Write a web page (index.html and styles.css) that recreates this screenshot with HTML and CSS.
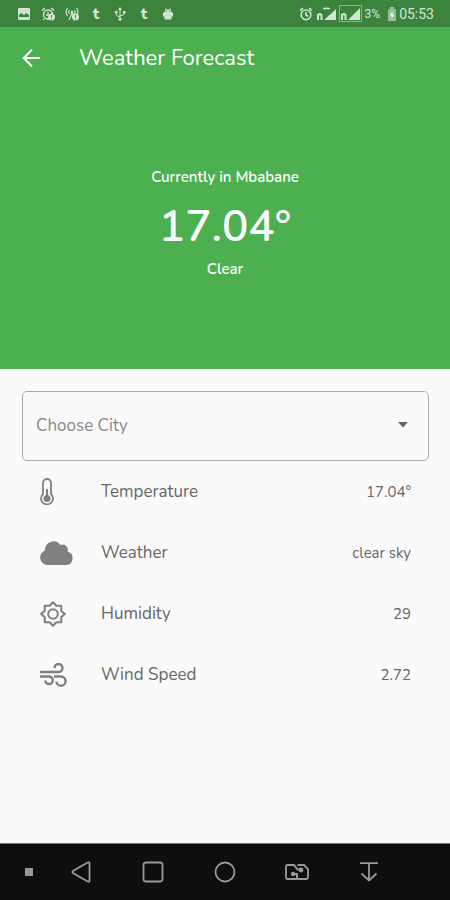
FILE: index.html
```html
<!DOCTYPE html>
<html lang="en">
<head>
    <meta charset="UTF-8">
    <meta name="viewport" content="width=device-width, initial-scale=1.0">
    <title>Weather Forecast</title>
    <link rel="stylesheet" href="styles.css">
</head>
<body>
    <div class="status-bar">
        <div class="notifications">
            <svg width="14" height="14" viewBox="0 0 14 14"><path fill="currentColor" fill-rule="evenodd" d="M2 1h10a1 1 0 0 1 1 1v10a1 1 0 0 1-1 1H2a1 1 0 0 1-1-1V2a1 1 0 0 1 1-1zM2 10h10V8L9 6 7 8 4 6 2 8z"/></svg>
            <svg width="14" height="14" viewBox="0 0 14 14"><g fill="none" stroke="currentColor" stroke-width="1.4"><circle cx="7" cy="7.5" r="4.5"/><path d="M1 3.5 4 1M10 1l3 2.5M7 5v3H5M3 12l-1 1"/></g><circle cx="10.5" cy="10" r="3.5" fill="currentColor"/><path d="M10.5 8v2.5M10.5 11.5v1" stroke="#3c833e"/></svg>
            <svg width="14" height="14" viewBox="0 0 14 14"><g fill="none" stroke="currentColor" stroke-width="1.2"><path d="M2.5 1Q-.5 5 2.5 9M4.5 3Q3 5 4.5 7M9.5 3Q11 5 9.5 7M11.5 1q3 4 0 8M7 6l-3 7M7 6l2 4"/></g><circle cx="7" cy="5" r="1.3" fill="currentColor"/><circle cx="10.5" cy="10" r="3.5" fill="currentColor"/><path d="M10.5 8v2.5M10.5 11.5v1" stroke="#3c833e"/></svg>
            <span class="letter">t</span>
            <svg width="14" height="14" viewBox="0 0 14 14"><g fill="none" stroke="currentColor"><path d="M7 2v10M3 5v2q0 2 4 3M11 5v2q0 1-4 2"/></g><path fill="currentColor" d="M7 0l2 3H5zM2 4h2.5v2.5H2zM10 4h2.5v2.5H10z"/><circle cx="7" cy="12.3" r="1.5" fill="currentColor"/></svg>
            <span class="letter">t</span>
            <svg width="14" height="14" viewBox="0 0 14 14"><path fill="currentColor" fill-rule="evenodd" d="M3.5 5.5Q3.5 3.5 5 2.8L4 1.5 4.6 1 6 2.4h2L9.4 1l.6.5-1 1.3q1.5.7 1.5 2.7H12v4h-1.5v2q0 1-1 1h-5q-1 0-1-1v-2H2v-4zM5 4v1h1V4zM8 4v1h1V4z"/></svg>
        </div>
        <div class="indicators">
            <svg width="14" height="14" viewBox="0 0 14 14"><g fill="none" stroke="currentColor" stroke-width="1.6"><circle cx="7" cy="7.8" r="4.8"/><path d="M1 3.6 4 1M10 1l3 2.6M7 5v3l2 1.2"/></g></svg>
            <svg width="20" height="15" viewBox="0 0 20 15"><path fill="currentColor" d="M20 3v11H8z"/><path fill="none" stroke="currentColor" stroke-width="2" d="M2 14V8M2 10q0-2 1.800-2T5.5 10v4"/><path fill="none" stroke="currentColor" d="M7 2.5h7M9 1v3M12 1v3"/></svg>
            <svg width="23" height="17" viewBox="0 0 23 17"><path fill="none" stroke="currentColor" opacity=".5" d="M.5.5h22v16H.5z"/><path fill="currentColor" d="M21 3v12H9z"/><path fill="none" stroke="currentColor" stroke-width="2" d="M3 15V9M3 11q0-2 1.800-2T6.5 11v4"/></svg>
            <span class="percent">3%</span>
            <svg width="8" height="14" viewBox="0 0 8 14"><path fill="currentColor" opacity=".6" d="M2 0h4v2h2v12H0V2h2z"/><path fill="#fff" d="M4.5 4 2 8.5h1.700L3.500 12 6 7.500H4.300z"/></svg>
            <time>05:53</time>
        </div>
    </div>

    <header class="app-bar">
        <button class="back" type="button" aria-label="Back">
            <svg width="20" height="20" viewBox="0 0 20 20"><path fill="none" stroke="currentColor" stroke-width="2" d="M18 10H3M10 1.500 1.800 10l8.200 8.500"/></svg>
        </button>
        <h1>Weather Forecast</h1>
    </header>

    <section class="current">
        <p>Currently in Mbabane</p>
        <p class="degrees">17.04°</p>
        <p>Clear</p>
    </section>

    <main class="details">
        <div class="city">
            <select aria-label="Choose City">
                <option>Choose City</option>
            </select>
            <svg class="arrow" width="10" height="6" viewBox="0 0 10 6"><path fill="currentColor" d="M0 0h10L5 5.500z"/></svg>
        </div>

        <table class="readings">
            <tr>
                <td class="icon"><svg width="14" height="28" viewBox="0 0 14 28"><path fill="none" stroke="currentColor" stroke-width="1.8" d="M3 16V5a4 4 0 0 1 8 0v11a6 6 0 1 1-8 0z"/><circle cx="7" cy="20.5" r="3.5" fill="currentColor"/><path stroke="currentColor" stroke-width="2" d="M7 11v10"/></svg></td>
                <th scope="row">Temperature</th>
                <td class="value">17.04°</td>
            </tr>
            <tr>
                <td class="icon"><svg width="34" height="24" viewBox="0 0 34 24"><path fill="currentColor" d="M7.500 24A7.500 7.500 0 0 1 5 9.500V8.500A8.500 8.500 0 0 1 20.500 4a5.200 5.200 0 0 1 7 6.500A6.900 6.900 0 0 1 26.500 24z"/></svg></td>
                <th scope="row">Weather</th>
                <td class="value">clear sky</td>
            </tr>
            <tr>
                <td class="icon"><svg width="26" height="26" viewBox="0 0 26 26"><g fill="none" stroke="currentColor" stroke-width="2" stroke-linejoin="round"><path d="M13 1.200 16.300 4.800 21.300 4.700 21.200 9.700 24.800 13 21.200 16.300 21.300 21.300 16.300 21.200 13 24.800 9.700 21.200 4.700 21.300 4.800 16.300 1.200 13 4.800 9.700 4.700 4.700 9.700 4.800z"/><circle cx="13" cy="13" r="4.800"/></g></svg></td>
                <th scope="row">Humidity</th>
                <td class="value">29</td>
            </tr>
            <tr>
                <td class="icon"><svg width="27" height="24" viewBox="0 0 27 24"><g fill="none" stroke="currentColor" stroke-width="2.4"><path d="M0 9h18.500a4 4 0 1 0-4-4M0 13.500h9a3.800 3.800 0 1 1-3.800 4M14 13.500h7a4.600 4.600 0 1 1-4.600 5"/></g></svg></td>
                <th scope="row">Wind Speed</th>
                <td class="value">2.72</td>
            </tr>
        </table>
    </main>

    <nav class="nav-bar">
        <button class="dot" type="button" aria-label="Hide bar"><svg width="8" height="8" viewBox="0 0 8 8"><path fill="currentColor" d="M0 0h8v8H0z"/></svg></button>
        <button type="button" aria-label="Back"><svg width="20" height="22" viewBox="0 0 20 22"><path fill="none" stroke="currentColor" stroke-width="1.8" stroke-linejoin="round" d="M16.500 1.500q2-.8 2 1v17q0 1.800-2 1L2 12q-1.200-1 0-2z"/></svg></button>
        <button type="button" aria-label="Recent apps"><svg width="22" height="22" viewBox="0 0 22 22"><rect x="1.5" y="1.5" width="19" height="19" rx="2.5" fill="none" stroke="currentColor" stroke-width="1.8"/></svg></button>
        <button type="button" aria-label="Home"><svg width="22" height="22" viewBox="0 0 22 22"><circle cx="11" cy="11" r="9.5" fill="none" stroke="currentColor" stroke-width="1.8"/></svg></button>
        <button type="button" aria-label="Switch"><svg width="24" height="18" viewBox="0 0 24 18"><g fill="none" stroke="currentColor" stroke-width="1.8"><path d="M8 11h4v5H2.500Q1 16 1 14.500v-11Q1 2 2.500 2H9l3.500 4.500H16"/><path d="M12 11v5h9.500q1.500 0 1.500-1.500V6l-4-4h-6.500"/></g><circle cx="8" cy="11" r="2.200" fill="currentColor"/><circle cx="16" cy="7" r="2.400" fill="currentColor"/></svg></button>
        <button type="button" aria-label="Pull down"><svg width="18" height="20" viewBox="0 0 18 20"><path fill="none" stroke="currentColor" stroke-width="1.8" d="M0 1.200h18M9 1v17M1.500 11.500 9 18.500l7.500-7"/></svg></button>
    </nav>
</body>
</html>
```

FILE: styles.css
```css
* {
    box-sizing: border-box;
}
body {
    display: flex;
    flex-direction: column;
    min-height: 100vh;
    margin: 0;
    background: #fafafa;
    color: #666;
    font-family: Nunito, 'Open Sans', sans-serif;
}
svg {
    display: block;
    flex: none;
}
button {
    display: flex;
    padding: 0;
    border: 0;
    background: none;
    color: inherit;
}
.status-bar {
    display: flex;
    justify-content: space-between;
    align-items: center;
    height: 27px;
    padding: 0 16px 0 17px;
    background: #3c833e;
    color: #d3e6d3;
}
.notifications {
    display: flex;
    align-items: center;
    gap: 10px;
}
.letter {
    width: 14px;
    font-size: 16px;
    font-weight: 800;
    line-height: 14px;
    text-align: center;
}
.indicators {
    display: flex;
    align-items: center;
    gap: 3px;
    font-family: Roboto, sans-serif;
    font-size: 14px;
}
.percent {
    margin-right: 5px;
    font-size: 12px;
}
.app-bar {
    display: flex;
    align-items: center;
    gap: 37px;
    height: 61px;
    padding: 0 22px;
    background: #4caf50;
    color: #fff;
}
.app-bar h1 {
    margin: 0;
    font-size: 22px;
    font-weight: 400;
}
.current {
    display: flex;
    flex-direction: column;
    justify-content: center;
    align-items: center;
    height: 281px;
    padding-bottom: 11px;
    background: #4caf50;
    color: #fff;
    font-size: 15px;
    font-weight: 600;
    line-height: 20px;
}
.current p {
    margin: 0;
}
.current .degrees {
    padding-top: 8px;
    font-size: 44px;
    line-height: 64px;
}
.details {
    flex: 1;
    padding: 22px 21px 0 22px;
}
.city {
    position: relative;
}
.city select {
    display: block;
    width: 100%;
    height: 70px;
    padding: 0 13px 2px;
    border: 1px solid #aaa;
    border-radius: 5px;
    appearance: none;
    background: none;
    color: #888;
    font-family: inherit;
    font-size: 17px;
    font-weight: 400;
}
.city .arrow {
    position: absolute;
    top: 31px;
    right: 21px;
    pointer-events: none;
}
.readings {
    width: 100%;
    border-collapse: collapse;
}
.readings tr {
    height: 61px;
}
.readings td,
.readings th {
    padding: 0;
}
.readings .icon {
    width: 79px;
    padding-left: 18px;
    color: #808080;
}
.readings th {
    font-size: 17px;
    font-weight: 400;
    text-align: left;
}
.readings .value {
    padding-right: 18px;
    font-size: 15px;
    text-align: right;
}
.nav-bar {
    display: flex;
    align-items: center;
    height: 57px;
    padding-right: 45px;
    border-top: 1px solid #777;
    background: #0e0e0e;
    color: #999;
}
.nav-bar button {
    flex: 1;
    justify-content: center;
}
.nav-bar .dot {
    flex: none;
    width: 45px;
    padding-left: 12px;
}
```
